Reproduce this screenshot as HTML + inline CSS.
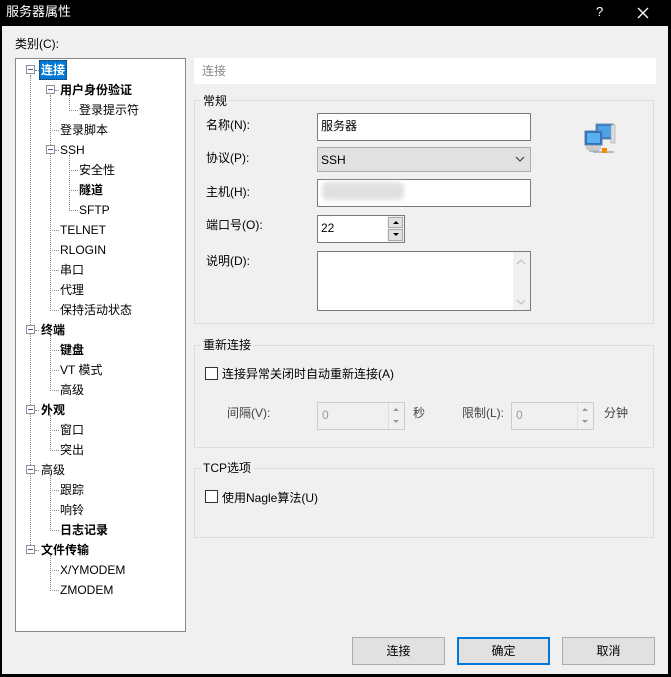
<!DOCTYPE html><html><head><meta charset="utf-8"><style>
*{box-sizing:border-box;margin:0;padding:0}
body{width:671px;height:677px;background:#000;position:relative;overflow:hidden;font-family:"Liberation Sans","Noto Sans CJK SC",sans-serif;font-size:12px;color:#000}
.a{position:absolute}
#client{left:2px;top:26px;width:666px;height:648px;background:#f0f0f0}
.t{position:absolute;white-space:nowrap;line-height:16px}
.b{font-weight:bold}
.exp{position:absolute;width:9px;height:9px;border:1px solid #919191;background:#fff}
.exp:after{content:"";position:absolute;left:1px;top:3px;width:5px;height:1px;background:#3c5a9e}
.dv{position:absolute;border-left:1px dotted #888}
.dh{position:absolute;border-top:1px dotted #888;width:7px}
.inp{position:absolute;background:#fff;border:1px solid #7a7a7a}
.grp{position:absolute;border:1px solid #dcdcdc}
.gl{position:absolute;background:#f0f0f0;padding:0 2px;line-height:14px}
.cb{position:absolute;width:13px;height:13px;border:1px solid #333;background:#fff}
.btn{position:absolute;height:28px;background:#e1e1e1;border:1px solid #adadad;text-align:center;line-height:26px}
.spin{position:absolute;width:16px;border-left:1px solid #ddd;background:#f0f0f0}
</style></head><body>
<div class="t" style="left:6px;top:4px;color:#fff;font-size:13px">服务器属性</div>
<div class="t" style="left:596px;top:4px;color:#fff;font-size:13px">?</div>
<svg class="a" style="left:637px;top:7px" width="12" height="12"><path d="M1 1L11 11M11 1L1 11" stroke="#fff" stroke-width="1.3"/></svg>
<div class="a" id="client"></div>
<div class="t" style="left:15px;top:36px">类别(C):</div>
<div class="a" style="left:15px;top:58px;width:171px;height:574px;background:#fff;border:1px solid #828790"></div>
<div class="dv" style="left:30px;top:75px;height:474px"></div>
<div class="dv" style="left:50px;top:95px;height:14px"></div>
<div class="dv" style="left:69px;top:95px;height:14px"></div>
<div class="dv" style="left:50px;top:95px;height:214px"></div>
<div class="dv" style="left:69px;top:155px;height:54px"></div>
<div class="dv" style="left:50px;top:335px;height:54px"></div>
<div class="dv" style="left:50px;top:415px;height:34px"></div>
<div class="dv" style="left:50px;top:475px;height:54px"></div>
<div class="dv" style="left:50px;top:555px;height:34px"></div>
<div id="tree"></div>
<div class="a" style="left:194px;top:58px;width:462px;height:26px;background:#fff"></div>
<div class="t" style="left:202px;top:63px;color:#888">连接</div>
<div class="grp" style="left:194px;top:100px;width:460px;height:224px"></div>
<div class="gl" style="left:201px;top:94px">常规</div>
<div class="t" style="left:206px;top:117px">名称(N):</div>
<div class="inp" style="left:317px;top:113px;width:214px;height:28px"></div>
<div class="t" style="left:321px;top:118px">服务器</div>
<div class="t" style="left:206px;top:150px">协议(P):</div>
<div class="inp" style="left:317px;top:147px;width:214px;height:25px;background:#e1e1e1;border-color:#adadad"></div>
<div class="t" style="left:321px;top:152px">SSH</div>
<svg class="a" style="left:515px;top:156px" width="10" height="6"><path d="M1 1L5 5L9 1" stroke="#333" fill="none"/></svg>
<div class="t" style="left:206px;top:184px">主机(H):</div>
<div class="inp" style="left:317px;top:179px;width:214px;height:28px"></div>
<div class="a" style="left:322px;top:182px;width:82px;height:18px;background:#e0e0e0;border-radius:6px;filter:blur(2px)"></div>
<div class="t" style="left:206px;top:217px">端口号(O):</div>
<div class="inp" style="left:317px;top:215px;width:88px;height:28px"></div>
<div class="t" style="left:321px;top:220px">22</div>
<div class="a" style="left:387px;top:216px;width:17px;height:26px;background:#f0f0f0"></div>
<div class="a" style="left:388px;top:217px;width:15px;height:11px;background:#e1e1e1;border:1px solid #aaa"></div>
<div class="a" style="left:388px;top:229px;width:15px;height:12px;background:#e1e1e1;border:1px solid #aaa"></div>
<svg class="a" style="left:392px;top:220px" width="8" height="20"><path d="M1 4L4 1L7 4Z M1 13L4 16L7 13Z" fill="#000"/></svg>
<div class="t" style="left:206px;top:253px">说明(D):</div>
<div class="inp" style="left:317px;top:251px;width:214px;height:60px"></div>
<div class="a" style="left:513px;top:252px;width:17px;height:58px;background:#f0f0f0"></div>
<svg class="a" style="left:515px;top:258px" width="12" height="50"><path d="M2 6L6 2L10 6M2 42L6 46L10 42" stroke="#bbb" fill="none"/></svg>
<svg class="a" style="left:583px;top:121px" width="34" height="34">
<rect x="13" y="3" width="17" height="15" fill="#3a79c8" stroke="#6b8fb5"/><rect x="15" y="5" width="13" height="11" fill="#4da3e6"/>
<rect x="28" y="4" width="4" height="18" fill="#ddd" stroke="#999" stroke-width=".5"/>
<rect x="2" y="10" width="17" height="14" fill="#2f6fbf" stroke="#5b7fa6"/><rect x="4" y="12" width="13" height="10" fill="#59b0ee"/>
<rect x="3" y="25" width="15" height="4" fill="#ccc"/><rect x="6" y="29" width="10" height="2" fill="#bbb"/>
<path d="M10 31H31" stroke="#9ab" stroke-width="1.5"/><rect x="19" y="27" width="5" height="5" fill="#f08a00"/>
</svg>
<div class="grp" style="left:194px;top:345px;width:460px;height:103px"></div>
<div class="gl" style="left:201px;top:338px">重新连接</div>
<div class="cb" style="left:205px;top:367px"></div>
<div class="t" style="left:222px;top:366px">连接异常关闭时自动重新连接(A)</div>
<div class="t" style="left:227px;top:405px;color:#444">间隔(V):</div>
<div class="inp" style="left:317px;top:402px;width:88px;height:28px;background:#f0f0f0;border-color:#ccc"></div>
<div class="t" style="left:322px;top:407px;color:#999">0</div>
<div class="spin" style="left:388px;top:403px;height:26px"></div>
<svg class="a" style="left:391px;top:406px" width="10" height="20"><path d="M2 5L5 2L8 5Z M2 14L5 17L8 14Z" fill="#999"/></svg>
<div class="t" style="left:413px;top:405px;color:#444">秒</div>
<div class="t" style="left:462px;top:405px;color:#444">限制(L):</div>
<div class="inp" style="left:511px;top:402px;width:83px;height:28px;background:#f0f0f0;border-color:#ccc"></div>
<div class="t" style="left:516px;top:407px;color:#999">0</div>
<div class="spin" style="left:577px;top:403px;height:26px"></div>
<svg class="a" style="left:580px;top:406px" width="10" height="20"><path d="M2 5L5 2L8 5Z M2 14L5 17L8 14Z" fill="#999"/></svg>
<div class="t" style="left:604px;top:405px;color:#444">分钟</div>
<div class="grp" style="left:194px;top:468px;width:460px;height:70px"></div>
<div class="gl" style="left:201px;top:461px">TCP选项</div>
<div class="cb" style="left:205px;top:490px"></div>
<div class="t" style="left:222px;top:490px">使用Nagle算法(U)</div>
<div class="btn" style="left:352px;top:637px;width:93px">连接</div>
<div class="btn" style="left:457px;top:637px;width:93px;border:2px solid #0078d7;line-height:24px">确定</div>
<div class="btn" style="left:562px;top:637px;width:93px">取消</div>
<script>
var items=[[0,1,1,"连接",1],[1,1,1,"用户身份验证"],[2,0,0,"登录提示符"],[1,0,0,"登录脚本"],[1,1,0,"SSH"],[2,0,0,"安全性"],[2,0,1,"隧道"],[2,0,0,"SFTP"],[1,0,0,"TELNET"],[1,0,0,"RLOGIN"],[1,0,0,"串口"],[1,0,0,"代理"],[1,0,0,"保持活动状态"],[0,1,1,"终端"],[1,0,1,"键盘"],[1,0,0,"VT 模式"],[1,0,0,"高级"],[0,1,1,"外观"],[1,0,0,"窗口"],[1,0,0,"突出"],[0,1,0,"高级"],[1,0,0,"跟踪"],[1,0,0,"响铃"],[1,0,1,"日志记录"],[0,1,1,"文件传输"],[1,0,0,"X/YMODEM"],[1,0,0,"ZMODEM"]];
var h="";items.forEach(function(it,i){var y=70+i*20;var lv=it[0];var tx=[41,60,79][lv];var ex=[26,46,65][lv];
if(it[1])h+='<div class="exp" style="left:'+ex+'px;top:'+(y-5)+'px"></div><div class="dh" style="left:'+(ex+9)+'px;top:'+y+'px;width:4px"></div>';
else h+='<div class="dh" style="left:'+(ex+4)+'px;top:'+y+'px;width:'+(tx-ex-5)+'px"></div>';
var st=it[4]?'background:#0078d7;color:#fff;border:1px dotted #333;padding:1px 1px;line-height:16px;left:'+(tx-2)+'px;top:'+(y-10)+'px':'left:'+tx+'px;top:'+(y-8)+'px';
h+='<div class="t'+(it[2]?' b':'')+'" style="'+st+'">'+it[3]+'</div>';});
document.getElementById("tree").innerHTML=h;
</script>
</body></html>
